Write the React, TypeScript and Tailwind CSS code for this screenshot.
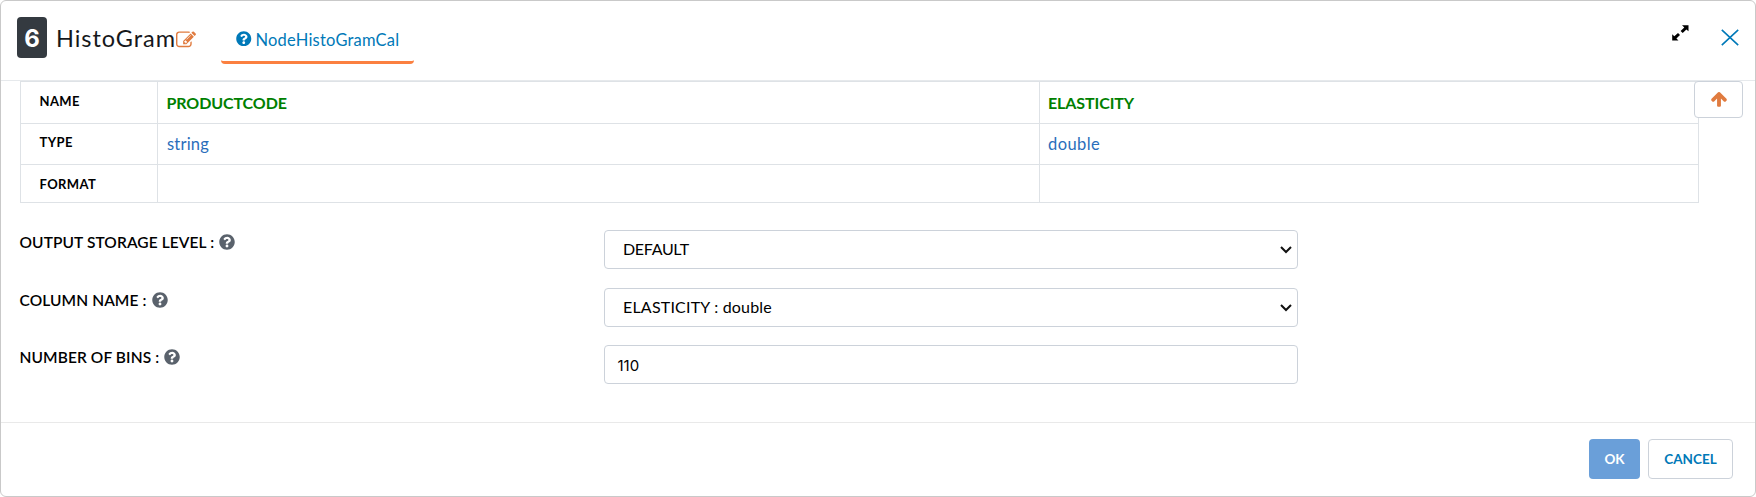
import type { ReactNode } from "react";
import { FaQuestionCircle } from "react-icons/fa";

function EditIcon() {
  return (
    <svg className="mt-[29px] size-5 shrink-0 text-[#e07b3f]" viewBox="0 0 1792 1792" fill="currentColor">
      <path d="M888 1184l116-116-152-152-116 116v56h96v96h56zm440-720q-16-16-33 1l-350 350q-17 17-1 33t33-1l350-350q17-17 1-33zm80 594v190q0 119-84.500 203.500t-203.500 84.500h-832q-119 0-203.500-84.500t-84.500-203.500v-832q0-119 84.500-203.500t203.500-84.500h832q63 0 117 25 15 7 18 23 3 17-9 29l-49 49q-14 14-32 8-23-6-45-6h-832q-66 0-113 47t-47 113v832q0 66 47 113t113 47h832q66 0 113-47t47-113v-126q0-13 9-22l64-64q15-15 35-7t20 29zm-96-738l288 288-672 672h-288v-288zm444 132l-92 92-288-288 92-92q28-28 68-28t68 28l152 152q28 28 28 68t-28 68z" />
    </svg>
  );
}

function ArrowUpIcon() {
  return (
    <svg className="size-[18px] text-[#e07b3f]" viewBox="0 0 1792 1792" fill="currentColor">
      <path d="M1675 971q0 51-37 90l-75 75q-38 38-91 38-54 0-90-38l-294-293v704q0 52-37.500 84.500t-90.500 32.500h-128q-53 0-90.500-32.500t-37.500-84.500v-704l-294 293q-36 38-90 38t-90-38l-75-75q-38-38-38-90 0-53 38-91l651-651q35-37 90-37 54 0 91 37l651 651q37 39 37 91z" />
    </svg>
  );
}

function ExpandIcon() {
  return (
    <svg width="17" height="16" viewBox="0 0 17 16" fill="#000">
      <path d="M10 .3h6.500v6l-2.100-1.900-3.700 3.500-2.100-2 3.700-3.500z" />
      <path d="M6.500 15.500H.2V9.300l2.100 2L6 7.900l2 2-3.600 3.500z" />
    </svg>
  );
}

function CloseIcon() {
  return (
    <svg width="18" height="17" viewBox="0 0 18 17" fill="none" stroke="#0079b8" strokeWidth="1.6">
      <path d="M.8.8l16.400 15.400M17.200.8L.8 16.200" />
    </svg>
  );
}

function Chevron() {
  return (
    <svg className="mr-[5px] ml-auto" width="12" height="8" viewBox="0 0 12 8" fill="none" stroke="#111" strokeWidth="2">
      <path d="M1 1l5 5 5-5" />
    </svg>
  );
}

function Field({ label, children }: { label: string; children: ReactNode }) {
  return (
    <div className="flex h-[39px]">
      <div className="flex h-6 w-[584px] shrink-0 items-center">
        <span className="-ml-[0.5px] pt-[2px] text-[15.5px] font-semibold tracking-[0.1px] whitespace-nowrap">{label}</span>
        <FaQuestionCircle className="ml-[5px] size-4 text-[#5a626c]" />
      </div>
      <div className="flex h-[39px] w-[694px] items-center rounded border border-[#ccd2da] text-base">{children}</div>
    </div>
  );
}

const cell = "flex items-center border-r border-b border-[#dee2e6]";
const head = "pl-[18.5px] text-[13px] font-bold tracking-[0.4px]";

export default function App() {
  return (
    <div className="flex h-[497px] w-[1756px] flex-col overflow-hidden rounded-md border border-[#c9c9c9] bg-white font-[Lato,sans-serif] text-black">
      <header className="flex h-20 shrink-0 items-start border-b border-[#e6e9ec]">
        <div className="mt-4 ml-4 flex h-[41px] w-[30px] items-center justify-center rounded bg-[#343a40] pt-[3px] font-[Inter,sans-serif] text-2xl font-bold text-white">
          6
        </div>
        <h1 className="mt-[21px] ml-[9px] w-[120px] shrink-0 text-[23.5px] leading-8 tracking-[0.95px] whitespace-nowrap text-[#16181b]">HistoGram</h1>
        <EditIcon />
        <div className="mt-[22px] ml-[25px] flex h-[41px] w-[193px] items-start rounded-b border-b-3 border-[#fb8040] pl-[15px] text-[#0079b8]">
          <FaQuestionCircle className="mt-[7.5px] size-[15.5px]" />
          <span className="mt-[5px] ml-1 text-[16.5px] leading-6 tracking-[0.2px]">NodeHistoGramCal</span>
        </div>
        <div className="mr-4 ml-auto flex items-start">
          <button className="mt-6 mr-8" aria-label="Expand">
            <ExpandIcon />
          </button>
          <button className="mt-7" aria-label="Close">
            <CloseIcon />
          </button>
        </div>
      </header>

      <main className="h-[342px] shrink-0 border-b border-[#e9e9e9] pl-[19px]">
        <div className="flex items-start">
          <div className="grid w-[1679px] shrink-0 grid-cols-[137px_882px_659px] grid-rows-[42px_41px_38px] border-t border-l border-[#dee2e6]">
            <div className={`${cell} ${head} pb-[2px]`}>NAME</div>
            <div className={`${cell} pl-[8.5px] text-base font-bold tracking-[-0.1px] text-[#008000]`}>PRODUCTCODE</div>
            <div className={`${cell} pl-[8px] text-base font-bold tracking-[-0.1px] text-[#008000]`}>ELASTICITY</div>
            <div className={`${cell} ${head} pb-[2px]`}>TYPE</div>
            <div className={`${cell} pt-px pl-[9px] text-[16.5px] tracking-[0.2px] text-[#2a6ebb]`}>string</div>
            <div className={`${cell} pt-px pl-[8px] text-[16.5px] tracking-[0.4px] text-[#2a6ebb]`}>double</div>
            <div className={`${cell} ${head} pt-[2px]`}>FORMAT</div>
            <div className={cell} />
            <div className={cell} />
          </div>
          <button className="z-10 -ml-[5px] flex h-[37px] w-[49px] shrink-0 items-center justify-center rounded border border-[#ccd2da] bg-white pb-px" aria-label="Collapse">
            <ArrowUpIcon />
          </button>
        </div>

        <div className="mt-[27px]">
          <Field label="OUTPUT STORAGE LEVEL :">
            <span className="pb-[2px] pl-[18px] tracking-[-0.3px]">DEFAULT</span>
            <Chevron />
          </Field>
          <div className="mt-[19px]">
            <Field label="COLUMN NAME :">
              <span className="pb-[2px] pl-[18px] tracking-[0.2px]">ELASTICITY : double</span>
              <Chevron />
            </Field>
          </div>
          <div className="mt-[18px]">
            <Field label="NUMBER OF BINS :">
              <span className="pt-[4px] pl-[12.5px] font-[Inter,sans-serif] text-[15px]">110</span>
            </Field>
          </div>
        </div>
      </main>

      <footer className="flex justify-end gap-2 pt-4 pr-[22px] text-[13.5px] font-bold">
        <button className="h-10 w-[51px] rounded bg-[#6a9fd9] text-white">OK</button>
        <button className="h-10 w-[85px] rounded border border-[#ccd2da] bg-white text-[#0079b8]">CANCEL</button>
      </footer>
    </div>
  );
}
